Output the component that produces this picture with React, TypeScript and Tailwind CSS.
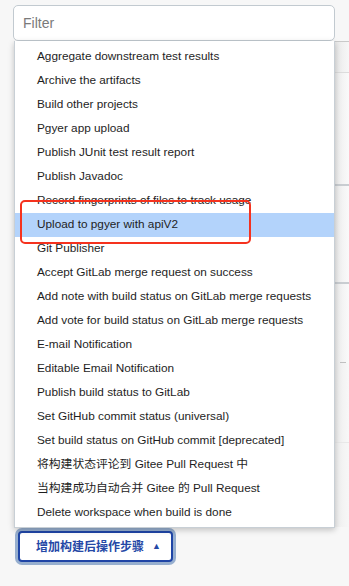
import React from 'react';

const items = [
  'Aggregate downstream test results',
  'Archive the artifacts',
  'Build other projects',
  'Pgyer app upload',
  'Publish JUnit test result report',
  'Publish Javadoc',
  'Record fingerprints of files to track usage',
  'Upload to pgyer with apiV2',
  'Git Publisher',
  'Accept GitLab merge request on success',
  'Add note with build status on GitLab merge requests',
  'Add vote for build status on GitLab merge requests',
  'E-mail Notification',
  'Editable Email Notification',
  'Publish build status to GitLab',
  'Set GitHub commit status (universal)',
  'Set build status on GitHub commit [deprecated]',
  '将构建状态评论到 Gitee Pull Request 中',
  '当构建成功自动合并 Gitee 的 Pull Request',
  'Delete workspace when build is done',
];

const selected = 7;

export default function App() {
  return (
    <div className="w-[349px] h-[586px] overflow-hidden bg-[#f7f7f7] flex font-['Liberation_Sans','Noto_Sans_CJK_SC',sans-serif]">
      {/* menu column */}
      <div className="w-[335px] shrink-0 pt-[5px] pl-[13px] flex flex-col relative z-10">
        <div className="w-[322px] h-[36px] bg-white border-[1.5px] border-[#c2cad0] rounded-[5px] flex items-center pl-[9px] text-[14px] text-[#7a7a7a]">
          Filter
        </div>
        <div className="relative ml-[1px] w-[321px] h-[487px] bg-white border border-[#c8cfd5] border-t-0 shadow-[0_2px_6px_rgba(0,0,0,0.22)] pt-[4px]">
          {items.map((label, i) => (
            <div
              key={label}
              className={
                'h-[24px] flex items-center pl-[22px] text-[11.8px] text-[#1e1e1e] whitespace-nowrap ' +
                (i === selected ? 'bg-[#b3d3fb]' : '')
              }
            >
              {label}
            </div>
          ))}
          {/* annotation */}
          <div className="absolute left-[5px] top-[159px] w-[231px] h-[44px] border-[2.5px] border-[#f5321e] rounded-[5px]" />
        </div>
        <div className="mt-[3px] ml-[5px] w-[155px] h-[31px] bg-white border-2 border-[#1f45a6] rounded-[4px] shadow-[0_0_0_3px_#97afcf] flex items-center pl-[16px] gap-[8px] text-[12px] font-semibold text-[#2548a6]">
          <span>增加构建后操作步骤</span>
          <span className="text-[9px] leading-none">▲</span>
        </div>
      </div>

      {/* page behind the menu */}
      <div className="flex-1 flex flex-col">
        <div className="h-[41px] shrink-0" />
        <div className="h-[31px] shrink-0 border-t border-[#c9c9c9] bg-gradient-to-r from-[#e9e9e9] to-[#f7f7f7]" />
        <div className="h-[112px] shrink-0 border-t border-[#dcdcdc] bg-gradient-to-r from-[#ececec] to-[#fafafa]" />
        <div className="h-[98px] shrink-0 border-t-2 border-[#c9cdd1] bg-gradient-to-r from-[#ececec] to-[#fafafa]" />
        <div className="h-[81px] shrink-0 border-t-2 border-[#c9cdd1] bg-gradient-to-r from-[#ececec] to-[#fafafa] flex flex-col justify-end">
          <div className="ml-[5px] w-[6px] h-[1px] bg-[#c0c0c0]" />
        </div>
        <div className="h-[79px] shrink-0 bg-gradient-to-r from-[#ececec] to-[#f8f8f8]" />
        <div className="h-[85px] shrink-0 border-t border-[#e8e8e8] bg-gradient-to-r from-[#eeeeee] to-[#f7f7f7]" />
      </div>
    </div>
  );
}
